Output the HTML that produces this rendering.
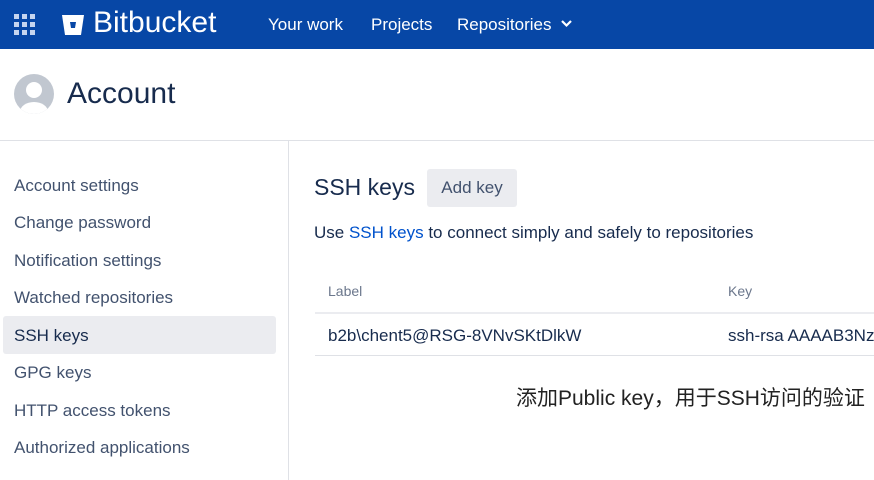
<!DOCTYPE html>
<html><head><meta charset="utf-8"><style>
*{margin:0;padding:0;box-sizing:border-box}
body{width:874px;height:480px;overflow:hidden;background:#fff;font-family:"Liberation Sans","Noto Sans CJK SC",sans-serif;color:#172b4d;position:relative}
.top{position:absolute;left:0;top:0;width:874px;height:49px;background:#0747a6;color:#fff}
.abs{position:absolute;white-space:nowrap}
.nav{font-size:17px;top:15px;color:#fff}
.side{font-size:17px;color:#42526e;left:14px}
</style></head><body>
<div class="top">
<svg class="abs" style="left:14px;top:14px" width="22" height="22">
<g fill="#c5d5f0"><rect x="0" y="0" width="5" height="5"/><rect x="8" y="0" width="5" height="5"/><rect x="16" y="0" width="5" height="5"/><rect x="0" y="8" width="5" height="5"/><rect x="8" y="8" width="5" height="5"/><rect x="16" y="8" width="5" height="5"/><rect x="0" y="16" width="5" height="5"/><rect x="8" y="16" width="5" height="5"/><rect x="16" y="16" width="5" height="5"/></g></svg>
<svg class="abs" style="left:62px;top:15px" width="22" height="20"><path d="M0 0H22L19 20H3Z" fill="#fff"/><path d="M8 7H14L13 13H9Z" fill="#0747a6"/></svg>
<div class="abs" style="left:93px;top:6px;font-size:30px;color:#fff">Bitbucket</div>
<div class="abs nav" style="left:268px">Your work</div>
<div class="abs nav" style="left:371px">Projects</div>
<div class="abs nav" style="left:457px">Repositories</div>
<svg class="abs" style="left:561px;top:20px" width="11" height="8"><path d="M1 1L5.5 5.5L10 1" stroke="#fff" stroke-width="2.2" fill="none"/></svg>
</div>
<svg class="abs" style="left:14px;top:74px" width="40" height="40"><defs><clipPath id="c"><circle cx="20" cy="20" r="20"/></clipPath></defs><circle cx="20" cy="20" r="20" fill="#c1c7d0"/><g clip-path="url(#c)" fill="#fff"><circle cx="20" cy="16" r="8"/><ellipse cx="20" cy="38" rx="14" ry="10"/></g></svg>
<div class="abs" style="left:67px;top:77px;font-size:30px;color:#172b4d">Account</div>
<div class="abs" style="left:0;top:140px;width:874px;height:1px;background:#dfe1e6"></div>
<div class="abs" style="left:288px;top:141px;width:1px;height:339px;background:#dfe1e6"></div>
<div class="abs side" style="top:176px">Account settings</div>
<div class="abs side" style="top:213px">Change password</div>
<div class="abs side" style="top:251px">Notification settings</div>
<div class="abs side" style="top:288px">Watched repositories</div>
<div class="abs" style="left:3px;top:316px;width:273px;height:38px;background:#ebecf0;border-radius:3px"></div>
<div class="abs side" style="top:326px;color:#172b4d">SSH keys</div>
<div class="abs side" style="top:363px">GPG keys</div>
<div class="abs side" style="top:401px">HTTP access tokens</div>
<div class="abs side" style="top:438px">Authorized applications</div>
<div class="abs" style="left:314px;top:174px;font-size:23px">SSH keys</div>
<div class="abs" style="left:427px;top:169px;width:90px;height:38px;background:#ebecf0;border-radius:3px;font-size:17px;color:#42526e;text-align:center;line-height:38px">Add key</div>
<div class="abs" style="left:314px;top:223px;font-size:17px">Use <span style="color:#0052cc">SSH keys</span> to connect simply and safely to repositories</div>
<div class="abs" style="left:328px;top:283px;font-size:14px;color:#6b778c">Label</div>
<div class="abs" style="left:728px;top:283px;font-size:14px;color:#6b778c">Key</div>
<div class="abs" style="left:315px;top:312px;width:559px;height:2px;background:#ebecf0"></div>
<div class="abs" style="left:328px;top:326px;font-size:17px">b2b\chent5@RSG-8VNvSKtDlkW</div>
<div class="abs" style="left:728px;top:326px;font-size:17px">ssh-rsa AAAAB3NzaC</div>
<div class="abs" style="left:315px;top:355px;width:559px;height:1px;background:#dfe1e6"></div>
<div class="abs" style="left:516px;top:382px;font-size:21px;color:#222">添加Public key，用于SSH访问的验证</div>
</body></html>
